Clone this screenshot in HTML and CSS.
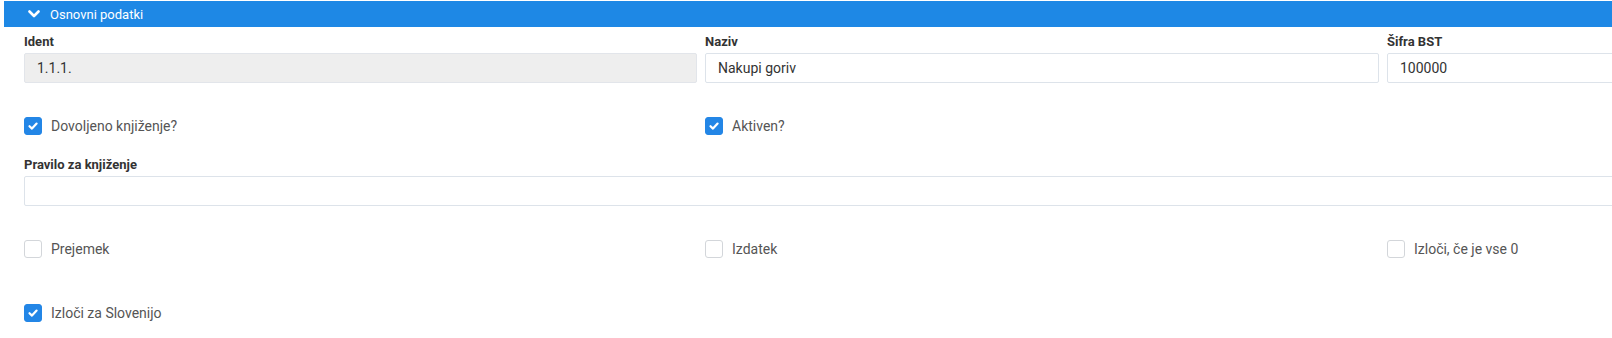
FILE: index.html
```html
<!DOCTYPE html>
<html lang="sl">
<head>
  <meta charset="UTF-8">
  <title>Osnovni podatki</title>
  <link rel="stylesheet" href="styles.css">
</head>
<body>
  <div class="panel">
    <div class="panel-header">
      <svg class="chevron" width="12" height="12" viewBox="0 0 12 12">
        <polyline points="1.5,3.5 6,8 10.5,3.5" fill="none" stroke="#fff" stroke-width="2.6" stroke-linecap="round" stroke-linejoin="round"/>
      </svg>
      <span class="panel-title">Osnovni podatki</span>
    </div>

    <div class="panel-body">
      <div class="row">
        <div class="field">
          <label class="field-label">Ident</label>
          <input class="field-input readonly" type="text" value="1.1.1." readonly>
        </div>
        <div class="field">
          <label class="field-label">Naziv</label>
          <input class="field-input" type="text" value="Nakupi goriv">
        </div>
        <div class="field">
          <label class="field-label">Šifra BST</label>
          <input class="field-input" type="text" value="100000">
        </div>
      </div>

      <div class="row check-row first">
        <label class="check"><span class="box checked"><svg width="12" height="12" viewBox="0 0 12 12"><polyline points="2.5,6.2 5,8.6 9.6,3.6" fill="none" stroke="#fff" stroke-width="2.2" stroke-linecap="round" stroke-linejoin="round"/></svg></span>Dovoljeno knjiženje?</label>
        <label class="check"><span class="box checked"><svg width="12" height="12" viewBox="0 0 12 12"><polyline points="2.5,6.2 5,8.6 9.6,3.6" fill="none" stroke="#fff" stroke-width="2.2" stroke-linecap="round" stroke-linejoin="round"/></svg></span>Aktiven?</label>
        <div></div>
      </div>

      <div class="field wide">
        <label class="field-label">Pravilo za knjiženje</label>
        <input class="field-input" type="text" value="">
      </div>

      <div class="row check-row second">
        <label class="check"><span class="box"></span>Prejemek</label>
        <label class="check"><span class="box"></span>Izdatek</label>
        <label class="check"><span class="box"></span>Izloči, če je vse 0</label>
      </div>

      <div class="row check-row third">
        <label class="check"><span class="box checked"><svg width="12" height="12" viewBox="0 0 12 12"><polyline points="2.5,6.2 5,8.6 9.6,3.6" fill="none" stroke="#fff" stroke-width="2.2" stroke-linecap="round" stroke-linejoin="round"/></svg></span>Izloči za Slovenijo</label>
      </div>
    </div>
  </div>
</body>
</html>
```

FILE: styles.css
```css
body {
  margin: 0;
  overflow: hidden;
  background: #fff;
  font-family: Roboto, "Liberation Sans", sans-serif;
  color: #333;
}
.panel {
  margin: 1px 0 0 4px;
  width: 2100px;
}
.panel-header {
  height: 26px;
  background: #1e88e5;
  display: flex;
  align-items: center;
  padding-left: 24px;
}
.chevron {
  display: block;
  margin-right: 10px;
}
.panel-title {
  color: #fff;
  font-size: 13px;
}
.panel-body {
  padding: 7px 0 0 20px;
}
.row {
  display: grid;
  grid-template-columns: 673px 674px 673px;
  column-gap: 8px;
}
.field-label {
  display: block;
  font-size: 13px;
  font-weight: bold;
  line-height: 16px;
  color: #333;
  margin-bottom: 3px;
}
.field-input {
  display: block;
  box-sizing: border-box;
  width: 100%;
  height: 30px;
  margin: 0;
  border: 1px solid #dde3ea;
  border-radius: 2px;
  padding: 0 12px;
  font-family: Roboto, "Liberation Sans", sans-serif;
  font-size: 14px;
  color: #333;
  background: #fff;
  outline: none;
}
.field-input.readonly {
  background: #eeeeee;
  border-color: #e2e5ea;
}
.field.wide {
  width: 2036px;
  margin-top: 22px;
}
.check-row.first {
  margin-top: 34px;
}
.check-row.second {
  margin-top: 34px;
}
.check-row.third {
  margin-top: 46px;
}
.check {
  display: flex;
  align-items: center;
  font-size: 14px;
  line-height: 18px;
  color: #555;
}
.box {
  box-sizing: border-box;
  width: 18px;
  height: 18px;
  border: 1px solid #d3d6da;
  border-radius: 3px;
  background: #fff;
  margin-right: 9px;
  display: flex;
  align-items: center;
  justify-content: center;
}
.box.checked {
  background: #2386e6;
  border-color: #2386e6;
}
.box svg {
  display: block;
}
```
